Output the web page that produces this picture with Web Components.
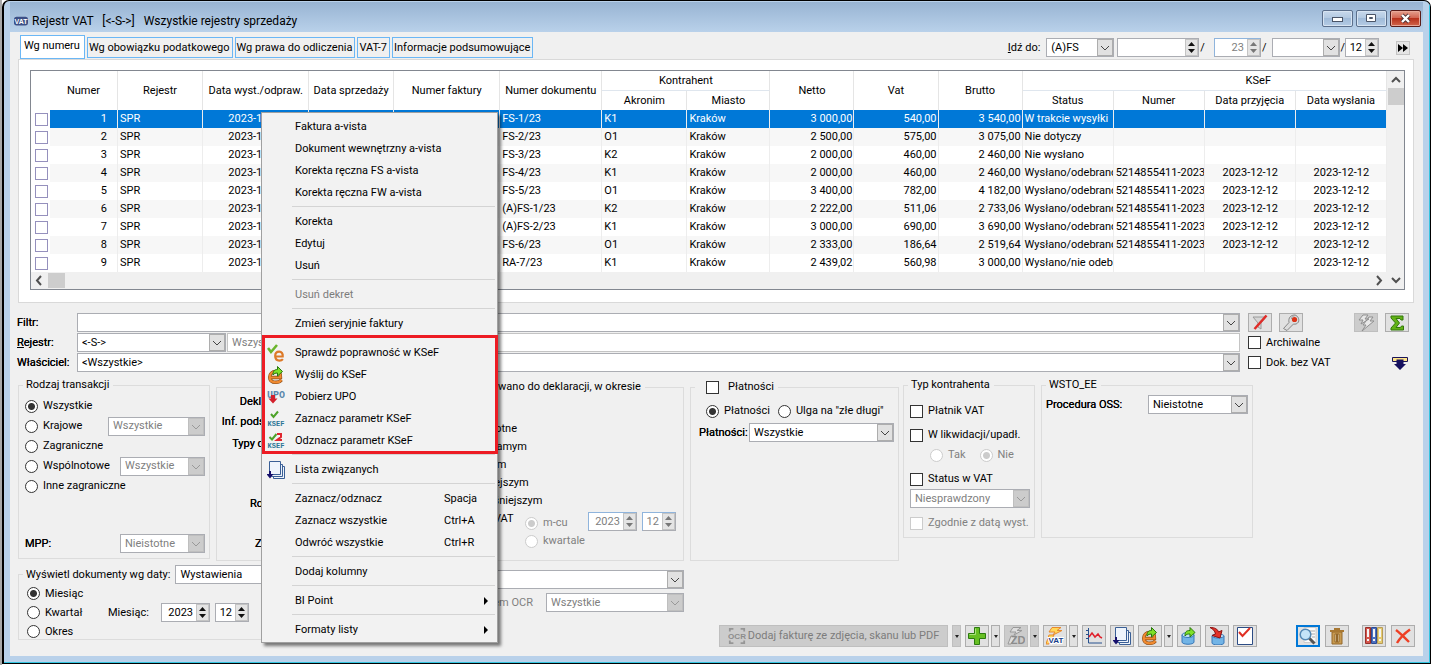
<!DOCTYPE html>
<html lang="pl">
<head>
<meta charset="utf-8">
<title>Rejestr VAT</title>
<style>
html{background:#fff}
body{margin:0;font:11px/16px Roboto,"Noto Sans",sans-serif;color:#000}
</style>
</head>
<body>
<vat-window></vat-window>
<script>
const ICONS = {
 vat:'<svg viewBox="0 0 16 16"><rect x="0" y="3" width="16" height="10" rx="3" fill="#3c4f86"/><text x="8" y="11" font-size="8" font-weight="bold" fill="#fff" text-anchor="middle" font-family="Liberation Sans">VAT</text></svg>',
 checkE:'<svg viewBox="0 0 18 18"><path d="M1 4l3 4 6-7" fill="none" stroke="#6ab52c" stroke-width="2.6"/><path d="M8.500 12.500h7.200c.4-3-1.200-4.800-3.500-4.800s-4 1.700-4 4.400c0 2.800 1.700 4.500 4.200 4.500 1.600 0 2.700-.5 3.500-1.500" fill="none" stroke="#dd7a28" stroke-width="2.200"/></svg>',
 sendE:'<svg viewBox="0 0 18 18"><path d="M3 11.500h10.500c.3-4-1-6-4.500-6-4 0-6.300 2.500-6.300 5.700C2.700 15 5.200 16.300 9 16.300c2.700 0 4.300-.8 5.500-2.300" fill="none" stroke="#8a4a12" stroke-width="3.400"/><path d="M3 11.500h10.500c.3-4-1-6-4.500-6-4 0-6.300 2.500-6.300 5.700C2.700 15 5.200 16.300 9 16.300c2.700 0 4.300-.8 5.500-2.300" fill="none" stroke="#f08a30" stroke-width="2.200"/><path d="M6 9c0-4 1.500-5.500 4.500-5.500V.5l5 5-5 4.500V7c-2 0-3 .3-4.500 2z" fill="#7fe028" stroke="#28780c"/></svg>',
 upo:'<svg viewBox="0 0 18 18"><text x="9" y="10" font-size="10" font-weight="bold" fill="#5a87ac" text-anchor="middle" font-family="Liberation Mono">UPO</text><path d="M4 7h4v3.500h2.500L6 15.500l-4.500-5H4z" fill="#d3202c"/></svg>',
 ksef:'<svg viewBox="0 0 18 18"><path d="M4 4l2.500 3L11 1.500" fill="none" stroke="#4ea32a" stroke-width="2"/><text x="9" y="16" font-size="7" font-weight="bold" fill="#2c7696" text-anchor="middle" font-family="Liberation Mono">KSEF</text></svg>',
 ksefNo:'<svg viewBox="0 0 18 18"><path d="M2.500 5L5 7.500 9.500 2" fill="none" stroke="#4ea32a" stroke-width="2"/><path d="M10 2h4v3l-4 3h5" fill="none" stroke="#e0262e" stroke-width="2"/><text x="9" y="16" font-size="7" font-weight="bold" fill="#2c7696" text-anchor="middle" font-family="Liberation Mono">KSEF</text></svg>',
 list:'<svg viewBox="0 0 18 18"><path d="M6.500 5.500h11v12h-11z" fill="#eef3fa" stroke="#3a5f96"/><path d="M4.500 3.500h11v12h-11z" fill="#eef3fa" stroke="#3a5f96"/><path d="M2.500.5h11v13h-11z" fill="#eef4fc" stroke="#3a5f96"/><path d="M2 10h2v3h2.500L3 17.500-.5 13H2z" fill="#16106c"/></svg>',
 funnel:'<svg viewBox="0 0 18 18"><path d="M2 3h13l-5 6v6l-3-2V9z" fill="#d5d5d5" stroke="#9a9a9a"/><path d="M15.500 1.500L3.500 15" stroke="#e02c28" stroke-width="2.500"/></svg>',
 wrench:'<svg viewBox="0 0 18 18"><path d="M1.500 14.500L7 8.500c-1-5 2-7.500 6-7.500 3 1 4.500 4 3.500 7-1.500 2-3 2.500-5 2l-6.500 6.500z" fill="#dcdcdc" stroke="#878787"/><path d="M9.500 5c0-2 1.500-3 3-3" fill="none" stroke="#999"/><circle cx="12.500" cy="5.500" r="2.600" fill="#dc3418"/></svg>',
 bolt:'<svg viewBox="0 0 18 18"><path d="M6 1h5L8 5h4L4 10l2-4H2zM12 3h4l-3 4h4L5 17l4-6H6z" fill="#e8e8e8" stroke="#8f8f8f"/></svg>',
 sigma:'<svg viewBox="0 0 18 18"><path d="M3 2h12v4h-2l-1-1.500H8L11.500 9 8 13.500h4.500l1-1.500h2v4H3v-2l4.500-5L3 4z" fill="#62b216" stroke="#33780a"/></svg>',
 drop:'<svg viewBox="0 0 18 18"><path d="M1.500 3.500h15v4h-15z" fill="#ffe48a" stroke="#1a1458"/><path d="M5.500 5.500h7V10H15l-6 6-6-6h2.500z" fill="#17115e"/></svg>',
 ocr:'<svg viewBox="0 0 20 18"><path d="M2 4V1h4M14 1h4v3M2 14v3h4M14 17h4v-3" fill="none" stroke="#969696" stroke-width="2"/><text x="10" y="12" font-size="9" font-weight="bold" fill="#8c8c8c" text-anchor="middle" font-family="Liberation Sans">OCR</text></svg>',
 plus:'<svg viewBox="0 0 18 18"><path d="M6.500.5h5v6h6v5h-6v6h-5v-6h-6v-5h6z" fill="#67bf24" stroke="#2c7a10"/><path d="M7.500 1.500v6h-6" fill="none" stroke="#a9e37a"/></svg>',
 zd:'<svg viewBox="0 0 18 18"><path d="M6 .5h8l-4 3h5L7 8l2-3H3zM4 9h5l-5 8H1z" fill="#dedede" stroke="#999"/><text x="11" y="17" font-size="11" font-weight="bold" fill="#8c8c8c" text-anchor="middle" font-family="Liberation Sans">ZD</text></svg>',
 boltVat:'<svg viewBox="0 0 18 18"><path d="M6 .5h9l-4 3h5L7 8l2-3H3zM3 8h5l-5 9H0z" fill="#ffd85a" stroke="#e8892c"/><text x="10" y="16" font-size="8" font-weight="bold" fill="#16408a" stroke="#fff" stroke-width="2" paint-order="stroke" text-anchor="middle" font-family="Liberation Sans">VAT</text></svg>',
 chart:'<svg viewBox="0 0 18 18"><path d="M3.500 1v15H17M1 3.500h2M1 7.500h2M1 11.500h2" fill="none" stroke="#27508e"/><path d="M4 10l3-4 3 4 3-3 2 3 2 1" fill="none" stroke="#e0202c" stroke-width="1.500"/></svg>',
 cylUp:'<svg viewBox="0 0 18 18"><path d="M2 8v7c0 3 12 3 12 0V8z" fill="#72b4e6" stroke="#3978b8"/><ellipse cx="8" cy="8" rx="6" ry="2.500" fill="#bfe0f7" stroke="#3978b8"/><path d="M5 9c0-4 1-5.500 5-5.500V.5l5 5-5 4.500V7c-2 0-3.500 0-5 2z" fill="#7fe028" stroke="#28780c"/></svg>',
 cylDown:'<svg viewBox="0 0 18 18"><path d="M4 9v7c0 2.500 12 2.500 12 0V9z" fill="#72b4e6" stroke="#3978b8"/><ellipse cx="10" cy="9" rx="6" ry="2" fill="#bfe0f7" stroke="#3978b8"/><path d="M2 .5c5 0 7.500 1.500 8.500 4.500L14 3.500 12 11 4 8.500 7.500 7C7 4 5 2 2 .5z" fill="#e33228" stroke="#8c1010"/></svg>',
 sheet:'<svg viewBox="0 0 18 18"><path d="M1.500.5h15v17h-15z" fill="#fff" stroke="#2c4c84"/><path d="M3 5l3.500 4L14 1" fill="none" stroke="#e03024" stroke-width="2"/></svg>',
 search:'<svg viewBox="0 0 18 18"><path d="M5 .5h12v15H5z" fill="#fafafa" stroke="#ccc"/><path d="M10 4h6M12 7h4M13 10h3" stroke="#aaa"/><circle cx="6.500" cy="7.500" r="5.300" fill="#c4e4f8" stroke="#5589b5" stroke-width="1.500"/><path d="M10.500 11.500l5 5" stroke="#555" stroke-width="3"/></svg>',
 trash:'<svg viewBox="0 0 18 18"><path d="M4 5h10v12H4z" fill="#c89a50" stroke="#94682a"/><path d="M2 4h14M6 2h6" stroke="#a87832" stroke-width="2"/><path d="M7 7h4v8H7z" fill="#f2e4c4" stroke="#94682a"/><path d="M9 7v8" stroke="#94682a" stroke-width="2"/></svg>',
 binders:'<svg viewBox="0 0 18 18"><path d="M.5.5h5v16h-5z" fill="#d4564c" stroke="#98312c"/><path d="M6.500.5h5v16h-5z" fill="#4d70c0" stroke="#2c4b92"/><path d="M12.500.5h5v16h-5z" fill="#e6cc70" stroke="#b89c58"/><path d="M2 2h2v8H2zM8 2h2v8H8zM14 2h2v8h-2zM2 12h2v2H2zM8 12h2v2H8zM14 12h2v2h-2z" fill="#f4f4f4"/></svg>',
 cross:'<svg viewBox="0 0 18 18"><path d="M2 3c4 3 9 8 13 12M16 2.500C11 6 6 11 3 16" fill="none" stroke="#ee3f24" stroke-width="2.400"/></svg>'
};

const BASE = `
*,:host{box-sizing:border-box}
:host([hidden]){display:none}
button,input,select{font:inherit;color:inherit;margin:0;border-radius:0}
svg{display:block}
input[type=checkbox],input[type=radio]{appearance:none;flex:none;width:13px;height:13px;margin:0;background:#fff;border:1px solid #333}
input[type=radio]{border-radius:50%}
input[type=radio]:checked{background:radial-gradient(circle,#333 0 3px,#fff 4px)}
input[type=checkbox]:checked{background:linear-gradient(#333,#333) center/7px 7px no-repeat #fff}
input:disabled{border-color:#ccc!important}
input[type=radio]:disabled:checked{background:radial-gradient(circle,#ccc 0 3px,#fff 4px)}
.opt{display:flex;align-items:center;gap:5px;white-space:nowrap}
.opt:has(input:disabled){color:#808080}
.strong{text-shadow:0 0 0 #000}
`;

function define(name, css, html) {
  const tpl = document.createElement('template');
  customElements.define(name, class extends HTMLElement {
    connectedCallback() {
      if (this.shadowRoot) return;
      tpl.innerHTML = `<style>${BASE}${css}</style>` + (typeof html === 'function' ? html(this) : html);
      this.attachShadow({mode: 'open'}).append(tpl.content.cloneNode(true));
    }
  });
}
const attr = (el, n, d = '') => el.getAttribute(n) ?? d;
const dis = el => el.hasAttribute('disabled') ? 'disabled' : '';

define('ui-icon', ':host{display:block;width:18px;height:18px;flex:none}svg{width:100%;height:100%}', el => ICONS[attr(el, 'name')] || '');

define('combo-box', `
:host{display:block;min-width:0}
div{position:relative;height:19px;background:#fff;border:1px solid #abadb3;display:grid;grid-template-columns:1fr}
select{appearance:none;border:0;background:none;width:100%;height:17px;padding:0 18px 0 4px;outline:0;opacity:1}
select:disabled{color:#808080;opacity:1}
svg{position:absolute;right:0;top:0;width:16px;height:17px;background:#e1e1e1;border:1px solid #adadad;pointer-events:none}
:host([disabled]) svg{background:#ccc;border-color:#bfbfbf}
path{fill:none;stroke:#444}
:host([disabled]) path{stroke:#999}`,
 el => `<div><select aria-label="${attr(el,'label')}" ${dis(el)}><option>${attr(el,'value').replace(/</g,'&lt;')}</option></select><svg viewBox="0 0 14 15"><path d="M3 6l4 4 4-4"/></svg></div>`);

define('spin-box', `
:host{display:block}
div{display:flex;height:19px;background:#fff;border:1px solid #abadb3;padding:1px}
input{flex:1;min-width:0;width:0;border:0;padding:0 4px 0 0;text-align:right;background:none;outline:0}
:host([disabled]) div{border-color:#8fb4dc #abadb3 #abadb3 #8fb4dc}
:host([disabled]) input{color:#808080}
svg{width:11px;height:15px;background:#e4e4e4;outline:1px solid #c4c4c4}
path{fill:#111}
:host([disabled]) path{fill:#777}`,
 el => `<div><input type="text" aria-label="${attr(el,'label')}" value="${attr(el,'value')}" ${dis(el)}><svg viewBox="0 0 11 15"><path d="M2 6l3.500-4L9 6zM2 9h7l-3.500 4z"/></svg></div>`);

define('group-box', `
:host{display:block}
fieldset{margin:0;height:100%;min-width:0;border:1px solid #dcdcdc;padding:0}
legend{padding:0 4px 0 3px;margin-left:4px;line-height:16px;min-height:16px;white-space:nowrap}
:host([plain]){padding-top:8px}`,
 el => `<fieldset>${el.hasAttribute('plain') ? '' : '<legend><slot name="legend"></slot></legend>'}<slot></slot></fieldset>`);

define('tool-button', `
:host{display:block;flex:none}
button{display:flex;align-items:center;justify-content:center;gap:2px;width:var(--w,24px);height:var(--h,22px);padding:0;background:#e1e1e1;border:1px solid #adadad;white-space:nowrap}
button:disabled{background:#ccc;border-color:#bfbfbf;color:#7c7c7c}
:host([arrow]) button{width:9px}
:host([arrow]) button::after{content:"";border:2px solid transparent;border-top:3px solid #222;border-bottom:0}
:host([focused]) button{border:2px solid #0078d7}`,
 el => `<button type="button" aria-label="${attr(el,'label')}" ${dis(el)}>${el.hasAttribute('icon') ? `<ui-icon name="${attr(el,'icon')}"></ui-icon>` : ''}<slot></slot></button>`);

define('title-bar', `
:host{display:flex;align-items:center;height:30px;padding:7px 2px 0 4px;background:linear-gradient(#98b4d3,#b9d1ea);font-size:12px;line-height:18px}
ui-icon{width:14px;height:14px;margin-right:4px}
h1{font:inherit;margin:0;flex:1;white-space:pre}
.btns{display:flex;gap:3px;align-self:flex-start;margin-top:1px}
button{width:31px;height:17px;padding:0;border:1px solid #5b6f8c;border-radius:2px;background:linear-gradient(#c8d9ec,#b1c8e1 50%,#a0bbd9 50%,#b5cce5);box-shadow:inset 0 0 0 1px #d7e4f2;display:grid;place-items:center}
.x{background:linear-gradient(#e4a08e,#d1604c 50%,#b8321c 50%,#d1664c);border-color:#5a1c18;box-shadow:inset 0 0 0 1px #e8a898}`,
 `<ui-icon name="vat"></ui-icon><h1><slot></slot></h1><div class="btns">
 <button aria-label="Minimalizuj"><svg width="13" height="9"><rect x="1.500" y="3.500" width="10" height="4" fill="#fff" stroke="#4a5568"/></svg></button>
 <button aria-label="Maksymalizuj"><svg width="11" height="9"><path d="M.5.5h9v7h-9zM3.500 3.500h3v1h-3z" fill="#fff" stroke="#4a5568"/></svg></button>
 <button class="x" aria-label="Zamknij"><svg width="13" height="11"><path d="M3 2l7 7M10 2L3 9" stroke="#4a3034" stroke-width="4"/><path d="M3 2l7 7M10 2L3 9" stroke="#fff" stroke-width="2.400"/></svg></button></div>`);

define('tab-strip', `
:host{display:flex;align-items:flex-start;gap:2px;flex:1}
button{height:21px;margin-top:2px;padding:0 2px 0 1px;border:1px solid #6bb7f5;background:#f0f0f0;white-space:nowrap;line-height:16px}
button[aria-selected=true]{height:24px;margin:0;padding:0 4px 3px 3px;background:#fff}`,
 el => `${attr(el,'tabs').split('|').map((t,i) => `<button role="tab" aria-selected="${i===0}">${t}</button>`).join('')}`);

define('goto-bar', `
:host{display:flex;align-items:center;height:19px;margin-top:3px;white-space:nowrap}
.l{margin-right:6px}
.s{padding:0 1px}
button{width:14px;height:14px;padding:0;margin-left:17px;border:1px solid #c4c4c4;background:#e4e4e4}`,
 `<span class="l"><u>I</u>dź do:</span><combo-box label="Typ dokumentu" value="(A)FS" style="width:68px;margin-right:3px"></combo-box>
 <spin-box label="Numer" style="width:82px"></spin-box><span class="s">/</span>
 <spin-box label="Rok" value="23" disabled style="width:47px;margin-left:8px"></spin-box><span class="s">/</span>
 <combo-box label="Seria" style="width:68px;margin-left:5px"></combo-box><span>/</span>
 <spin-box label="Miesiąc" value="12" style="width:34px"></spin-box>
 <button aria-label="Idź"><svg width="12" height="12"><path d="M1 2l5 4-5 4zM6 2l5 4-5 4z"/></svg></button>`);

const ROWS = [
 ['1','FS-1/23','K1','3 000,00','540,00','3 540,00','W trakcie wysyłki','','',''],
 ['2','FS-2/23','O1','2 500,00','575,00','3 075,00','Nie dotyczy','','',''],
 ['3','FS-3/23','K2','2 000,00','460,00','2 460,00','Nie wysłano','','',''],
 ['4','FS-4/23','K1','2 000,00','460,00','2 460,00','Wysłano/odebrano','5214855411-2023','2023-12-12','2023-12-12'],
 ['5','FS-5/23','O1','3 400,00','782,00','4 182,00','Wysłano/odebrano','5214855411-2023','2023-12-12','2023-12-12'],
 ['6','(A)FS-1/23','K2','2 222,00','511,06','2 733,06','Wysłano/odebrano','5214855411-2023','2023-12-12','2023-12-12'],
 ['7','(A)FS-2/23','K1','3 000,00','690,00','3 690,00','Wysłano/odebrano','5214855411-2023','2023-12-12','2023-12-12'],
 ['8','FS-6/23','O1','2 333,00','186,64','2 519,64','Wysłano/odebrano','5214855411-2023','2023-12-12','2023-12-12'],
 ['9','RA-7/23','K1','2 439,02','560,98','3 000,00','Wysłano/nie odeb','','','2023-12-12']];
const COLS = [19,68,85,106,85,106,102,85,83,84,84,84,91,91,91,91];

define('data-grid', `
:host{display:grid;grid-template-columns:1fr 17px;border:1px solid #828790;background:#fff}
table{width:100%;table-layout:fixed;border-collapse:separate;border-spacing:0}
th{font-weight:normal;padding:0;height:20px;line-height:18px;white-space:nowrap;border-right:1px solid #e5e5e5}
thead tr:last-child th{height:19px}
th:first-child[rowspan]{border:0}
th.g{border-bottom:1px solid #dfe6ee}
th.k{padding-left:108px}
td{height:18px;padding:0 1px 0 2px;line-height:18px;white-space:nowrap;overflow:hidden;border-right:1px solid #ededed}
td:first-child{padding:0 0 0 4px;border:0;background:#fff}
td input{display:block;border-color:#9590bd!important}
tbody tr:nth-child(even){background:#f7f7f7}
tbody tr.sel{background:#0078d7;color:#fff}
.n{text-align:right}.c{text-align:center}
td.id{padding-right:10px}
.v{background:#f0f0f0;display:flex;flex-direction:column;align-items:center;justify-content:space-between;grid-row:1/3;grid-column:2}
.v svg,.h svg{fill:none;stroke:#505050;stroke-width:2}
.thumb{background:#cdcdcd;width:16px;height:17px}
.h{height:17px;background:#f0f0f0;display:flex;align-items:center;justify-content:space-between}
.h .thumb{width:17px;height:15px}
.e{display:flex}.v .e{flex-direction:column}`,
 `<table><colgroup>${COLS.map(w => `<col style="width:${w}px">`).join('')}</colgroup><thead><tr><th rowspan="2"></th>${
 ['Numer','Rejestr','Data wyst./odpraw.','Data sprzedaży','Numer faktury','Numer dokumentu'].map(t => `<th rowspan="2">${t}</th>`).join('')
 }<th colspan="2" class="g">Kontrahent</th><th rowspan="2">Netto</th><th rowspan="2">Vat</th><th rowspan="2">Brutto</th><th colspan="4" class="g k">KSeF</th></tr><tr>${
 ['Akronim','Miasto','Status','Numer','Data przyjęcia','Data wysłania'].map(t => `<th>${t}</th>`).join('')}</tr></thead><tbody>${
 ROWS.map((r,i) => `<tr class="${i ? '' : 'sel'}"><td><input type="checkbox" aria-label="Wiersz ${r[0]}"></td><td class="n id">${r[0]}</td><td>SPR</td><td class="c">2023-12-12</td><td></td><td></td><td>${r[1]}</td><td>${r[2]}</td><td>Kraków</td><td class="n">${r[3]}</td><td class="n">${r[4]}</td><td class="n">${r[5]}</td><td>${r[6]}</td><td>${r[7]}</td><td class="c">${r[8]}</td><td class="c">${r[9]}</td></tr>`).join('')
 }</tbody></table><div class="v"><div class="e"><svg width="16" height="17"><path d="M4 11l4-4 4 4"/></svg><div class="thumb"></div></div><svg width="16" height="17"><path d="M4 6l4 4 4-4"/></svg></div>
 <div class="h"><div class="e"><svg width="17" height="15"><path d="M10 3L6 7.500l4 4.500"/></svg><div class="thumb"></div></div><svg width="17" height="15"><path d="M7 3l4 4.500L7 12"/></svg></div>`);

define('filter-rows', `
:host{display:grid;grid-template-columns:60px 1fr 169px;column-gap:0;row-gap:1px;grid-auto-rows:19px;align-items:center;padding:10px 14px 0 7px}
.pair{display:flex;gap:1px}
.pair combo-box{width:149px}
.pair input{flex:1;height:19px;border:1px solid #c4c4c4;background:#fff;padding:0 4px;color:#808080}
.side{display:flex;align-items:center;justify-content:space-between;padding-left:8px}
.btns{display:flex;gap:7px}
tool-button{--h:19px}`,
 `<span class="strong">Filtr:</span><combo-box label="Filtr"></combo-box>
 <div class="side"><div class="btns"><tool-button icon="funnel" label="Wyczyść filtr"></tool-button><tool-button icon="wrench" label="Konstruktor filtra"></tool-button></div><div class="btns"><tool-button icon="bolt" label="Wykonaj" disabled></tool-button><tool-button icon="sigma" label="Suma"></tool-button></div></div>
 <span class="strong"><u>R</u>ejestr:</span><div class="pair"><combo-box label="Rejestr" value="<-S->"></combo-box><input readonly value="Wszystkie rejestry sprzedaży" aria-label="Nazwa rejestru"></div>
 <div class="side"><label class="opt"><input type="checkbox">Archiwalne</label></div>
 <span class="strong">Właściciel:</span><combo-box label="Właściciel" value="<Wszystkie>"></combo-box>
 <div class="side"><label class="opt"><input type="checkbox">Dok. bez VAT</label><ui-icon name="drop"></ui-icon></div>`);

define('criteria-row', `
:host{display:flex;align-items:flex-start;gap:6px;padding:5px 0 0 8px}
.low{margin-top:2px}
.tall{height:182px}.short{height:161px}
.kind{width:192px;display:block}
.kind .rows{display:grid;grid-auto-rows:20px;align-items:center;padding:3px 4px 0 6px}
.row{display:flex;align-items:center;justify-content:space-between}
.kind .mpp{margin-top:38px;padding:0 4px 0 6px}
combo-box.s{width:85px}
.decl{width:224px}
.decl .rows{display:grid;grid-template-columns:105px 100px;grid-template-rows:20px 20px 24px 38px 20px 20px 20px;column-gap:4px;align-items:center;padding:4px 4px 0 2px}
.decl .strong{text-align:right;white-space:nowrap}
.decl .w{grid-column:1/3}
.per{width:238px}
.per .rows{display:grid;grid-auto-rows:18px;align-items:start;padding:25px 6px 0 2px}
.per .rows>.opt,.per .last>.opt{height:18px}
.per .last{display:flex;align-items:flex-start}
.per .last>.opt{width:76px}
.stack{display:grid;grid-auto-rows:18px;padding-top:4px}
.per spin-box{margin-top:2px}
.pay{width:209px}
.pay .r{display:flex;align-items:center;gap:8px;height:20px;padding-left:15px;margin-top:6px}
.pay .c{display:flex;align-items:center;justify-content:space-between;padding:0 4px 0 8px;margin-top:2px}
.lg{gap:9px;margin-left:8px}
.typ{width:132px;margin-left:-2px}
.typ .rows{display:grid;padding:8px 4px 0 6px}
.typ .rows>*{height:20px}
.typ .sub{display:flex;gap:14px;padding-left:20px}
.typ .sp{margin-top:4px}
.wsto{width:212px}
.wsto .r{display:flex;align-items:center;justify-content:space-between;padding:2px 4px 0 4px}
.wsto combo-box{width:100px}`,
 `<group-box class="kind tall"><span slot="legend">Rodzaj transakcji</span><div class="rows">
 <label class="opt"><input type="radio" name="k" checked>Wszystkie</label>
 <div class="row"><label class="opt"><input type="radio" name="k">Krajowe</label><combo-box label="Krajowe" value="Wszystkie" disabled style="width:97px"></combo-box></div>
 <label class="opt"><input type="radio" name="k">Zagraniczne</label>
 <div class="row"><label class="opt"><input type="radio" name="k">Wspólnotowe</label><combo-box class="s" label="Wspólnotowe" value="Wszystkie" disabled></combo-box></div>
 <label class="opt"><input type="radio" name="k">Inne zagraniczne</label></div>
 <div class="row mpp"><span class="strong">MPP:</span><combo-box class="s" label="MPP" value="Nieistotne" disabled></combo-box></div></group-box>
 <group-box class="decl tall low" plain><div class="rows">
 <span class="strong">Deklaracja VAT-7:</span><combo-box label="Deklaracja" value="Wszystkie"></combo-box>
 <span class="strong">Inf. podsumowująca:</span><combo-box label="Inf. podsumowująca" value="Wszystkie"></combo-box>
 <span class="strong">Typy dokumentów:</span><combo-box label="Typy" value="Wszystkie"></combo-box>
 <span class="w"></span>
 <span class="strong">Rodzaj zakupu:</span><combo-box label="Rodzaj" value="Wszystkie"></combo-box>
 <span class="w"></span>
 <span class="strong">Zatwierdzone:</span><combo-box label="Zatwierdzone" value="Wszystkie"></combo-box></div></group-box>
 <group-box class="per tall low"><span slot="legend">Kwalifikowano do deklaracji, w okresie</span><div class="rows">
 <label class="opt"><input type="radio" name="p" checked>Nieistotne</label>
 <label class="opt"><input type="radio" name="p">Tym samym</label>
 <label class="opt"><input type="radio" name="p">Różnym</label>
 <label class="opt"><input type="radio" name="p">Późniejszym</label>
 <label class="opt"><input type="radio" name="p">Wcześniejszym</label>
 <div class="last"><label class="opt"><input type="radio" name="p">Dekl. VAT</label><div class="stack"><label class="opt"><input type="radio" name="q" disabled checked>m-cu</label><label class="opt"><input type="radio" name="q" disabled>kwartale</label></div>
 <spin-box label="Rok" value="2023" disabled style="width:49px;margin-left:3px"></spin-box><spin-box label="Miesiąc" value="12" disabled style="width:34px;margin-left:5px"></spin-box></div></div></group-box>
 <group-box class="pay tall low"><label slot="legend" class="opt lg"><input type="checkbox">Płatności</label>
 <div class="r"><label class="opt"><input type="radio" name="z" checked>Płatności</label><label class="opt"><input type="radio" name="z">Ulga na "złe długi"</label></div>
 <div class="c"><span class="strong">Płatności:</span><combo-box label="Płatności" value="Wszystkie" style="width:145px"></combo-box></div></group-box>
 <group-box class="typ short"><span slot="legend">Typ kontrahenta</span><div class="rows">
 <label class="opt"><input type="checkbox">Płatnik VAT</label>
 <label class="opt sp"><input type="checkbox">W likwidacji/upadł.</label>
 <div class="sub"><label class="opt"><input type="radio" name="l" disabled>Tak</label><label class="opt"><input type="radio" name="l" disabled checked>Nie</label></div>
 <label class="opt sp"><input type="checkbox">Status w VAT</label>
 <combo-box label="Status w VAT" value="Niesprawdzony" disabled></combo-box>
 <label class="opt sp"><input type="checkbox" disabled>Zgodnie z datą wyst.</label></div></group-box>
 <group-box class="wsto short"><span slot="legend">WSTO_EE</span><div class="r"><span class="strong">Procedura OSS:</span><combo-box label="Procedura OSS" value="Nieistotne"></combo-box></div></group-box>`);

define('bottom-bar', `
:host{display:flex;align-items:flex-start;min-height:95px;padding:4px 8px 9px 8px}
.date{width:300px;height:75px}
.lg{display:flex;align-items:center;gap:5px}
.lg combo-box{width:110px}
.in{display:flex;gap:26px;padding-left:8px}
.radios{display:grid;grid-auto-rows:19px;width:55px}
.m{display:flex;align-items:center;height:19px;margin-top:19px;gap:5px;white-space:nowrap}
.m span{width:48px}
.ocr{display:grid;grid-template-columns:172px 138px;gap:4px 13px;margin-left:43px;padding-top:5px;align-items:center;color:#808080;width:323px}
.ocr .w{grid-column:1/3;margin-left:40px}
.ocr span{text-align:right;white-space:nowrap}
.tools{display:flex;margin-left:auto;align-self:flex-end;gap:4px}
tool-button+tool-button[arrow]:not([first]){margin-left:-2px}
.gap{margin-left:35px}.g2{margin-left:9px}.g1{margin-left:1px}`,
 `<group-box class="date"><div slot="legend" class="lg">Wyświetl dokumenty wg daty:<combo-box label="Wyświetl dokumenty wg daty" value="Wystawienia"></combo-box></div>
 <div class="in"><div class="radios"><label class="opt"><input type="radio" name="d" checked>Miesiąc</label><label class="opt"><input type="radio" name="d">Kwartał</label><label class="opt"><input type="radio" name="d">Okres</label></div>
 <div class="m"><span>Miesiąc:</span><spin-box label="Rok" value="2023" style="width:49px"></spin-box><spin-box label="Miesiąc" value="12" style="width:34px"></spin-box></div></div></group-box>
 <div class="ocr"><combo-box class="w" label="Dokument"></combo-box><span>Z programem OCR</span><combo-box label="OCR" value="Wszystkie" disabled></combo-box></div>
 <div class="tools"><tool-button icon="ocr" label="Dodaj fakturę" disabled style="--w:229px">Dodaj fakturę ze zdjęcia, skanu lub PDF</tool-button><tool-button arrow first disabled label="Więcej"></tool-button>
 <tool-button icon="plus" label="Dodaj"></tool-button><tool-button arrow label="Więcej"></tool-button>
 <tool-button icon="zd" label="Złe długi" disabled></tool-button><tool-button arrow disabled label="Więcej"></tool-button>
 <tool-button icon="boltVat" label="VAT"></tool-button><tool-button arrow label="Więcej"></tool-button>
 <tool-button icon="chart" label="Wykres"></tool-button><tool-button icon="list" label="Lista związanych"></tool-button>
 <tool-button icon="sendE" label="Wyślij do KSeF"></tool-button><tool-button arrow label="Więcej"></tool-button>
 <tool-button icon="cylUp" label="Eksport"></tool-button><tool-button icon="cylDown" label="Import"></tool-button><tool-button icon="sheet" label="Zaznacz"></tool-button>
 <tool-button icon="search" label="Podgląd" focused class="gap"></tool-button><tool-button icon="trash" label="Usuń" class="g1"></tool-button>
 <tool-button icon="binders" label="Rejestry" class="g2"></tool-button><tool-button icon="cross" label="Zamknij" class="g1"></tool-button></div>`);

define('menu-entry', `
:host{display:block}
button{display:grid;grid-template-columns:32px 1fr 52px;align-items:center;width:100%;height:22px;border:0;padding:2px 0 0;background:none;text-align:left;white-space:nowrap}
button:disabled{color:#7c7c7c}
button>span:first-child{padding-left:4px}
.a{justify-self:end;margin-right:7px}`,
 el => `<button type="button" role="menuitem" ${dis(el)}><span>${el.hasAttribute('icon') ? `<ui-icon name="${attr(el,'icon')}"></ui-icon>` : ''}</span><span><slot></slot></span>${el.hasAttribute('sub') ? '<svg class="a" width="6" height="8"><path d="M1 0l4 4-4 4z"/></svg>' : `<span>${attr(el,'key')}</span>`}</button>`);
define('menu-line', ':host{display:block;height:7px;padding:3px 1px 0 29px}hr{border:0;height:1px;background:#d4d4d4;margin:0}', '<hr>');
define('menu-marked', ':host{display:block;position:relative}:host::after{content:"";position:absolute;inset:-6px -2px -3px -1px;border:3px solid #ed1c24;pointer-events:none}', '<slot></slot>');
define('context-menu', `
:host{display:block;width:237px;padding:2px 1px;background:#f2f2f2;border:1px solid #a0a0a0;box-shadow:3px 3px 3px rgba(0,0,0,.5)}`, '<slot></slot>');

define('vat-window', `
:host{display:block;position:relative;min-width:1300px;background:#fff;border-left:2px solid #a9a9a9;padding:0 3px 1px 0}
.frame{background:#b9d1ea;border:1px solid #000;border-width:1px 1px 1px 2px;border-radius:7px 7px 0 0;padding-top:1px;overflow:hidden}
.in{border:solid #35c5e0;border-width:0 1px 1px 0;padding:0 6px 6px 6px}
.body{background:#f0f0f0}
.top{display:flex;padding:3px 13px 0 10px}
.panel{margin:0 9px 0 8px;border:1px solid #d9d9d9;background:#fff;padding:10px 8px 12px 11px}
context-menu{position:absolute;left:259px;top:112px}`,
 `<div class="frame"><div class="in"><title-bar>Rejestr VAT   [&lt;-S-&gt;]   Wszystkie rejestry sprzedaży</title-bar>
 <div class="body"><div class="top"><tab-strip role="tablist" tabs="Wg numeru|Wg obowiązku podatkowego|Wg prawa do odliczenia|VAT-7|Informacje podsumowujące"></tab-strip><goto-bar></goto-bar></div>
 <div class="panel"><data-grid></data-grid></div>
 <filter-rows></filter-rows><criteria-row></criteria-row><bottom-bar></bottom-bar></div></div></div>
 <context-menu role="menu"><menu-entry>Faktura a-vista</menu-entry><menu-entry>Dokument wewnętrzny a-vista</menu-entry><menu-entry>Korekta ręczna FS a-vista</menu-entry><menu-entry>Korekta ręczna FW a-vista</menu-entry><menu-line></menu-line>
 <menu-entry>Korekta</menu-entry><menu-entry>Edytuj</menu-entry><menu-entry>Usuń</menu-entry><menu-line></menu-line>
 <menu-entry disabled>Usuń dekret</menu-entry><menu-line></menu-line><menu-entry>Zmień seryjnie faktury</menu-entry><menu-line></menu-line>
 <menu-marked><menu-entry icon="checkE">Sprawdź poprawność w KSeF</menu-entry><menu-entry icon="sendE">Wyślij do KSeF</menu-entry><menu-entry icon="upo">Pobierz UPO</menu-entry><menu-entry icon="ksef">Zaznacz parametr KSeF</menu-entry><menu-entry icon="ksefNo">Odznacz parametr KSeF</menu-entry></menu-marked><menu-line></menu-line>
 <menu-entry icon="list">Lista związanych</menu-entry><menu-line></menu-line>
 <menu-entry key="Spacja">Zaznacz/odznacz</menu-entry><menu-entry key="Ctrl+A">Zaznacz wszystkie</menu-entry><menu-entry key="Ctrl+R">Odwróć wszystkie</menu-entry><menu-line></menu-line>
 <menu-entry>Dodaj kolumny</menu-entry><menu-line></menu-line><menu-entry sub>BI Point</menu-entry><menu-line></menu-line><menu-entry sub>Formaty listy</menu-entry></context-menu>`);
</script>
</body>
</html>
